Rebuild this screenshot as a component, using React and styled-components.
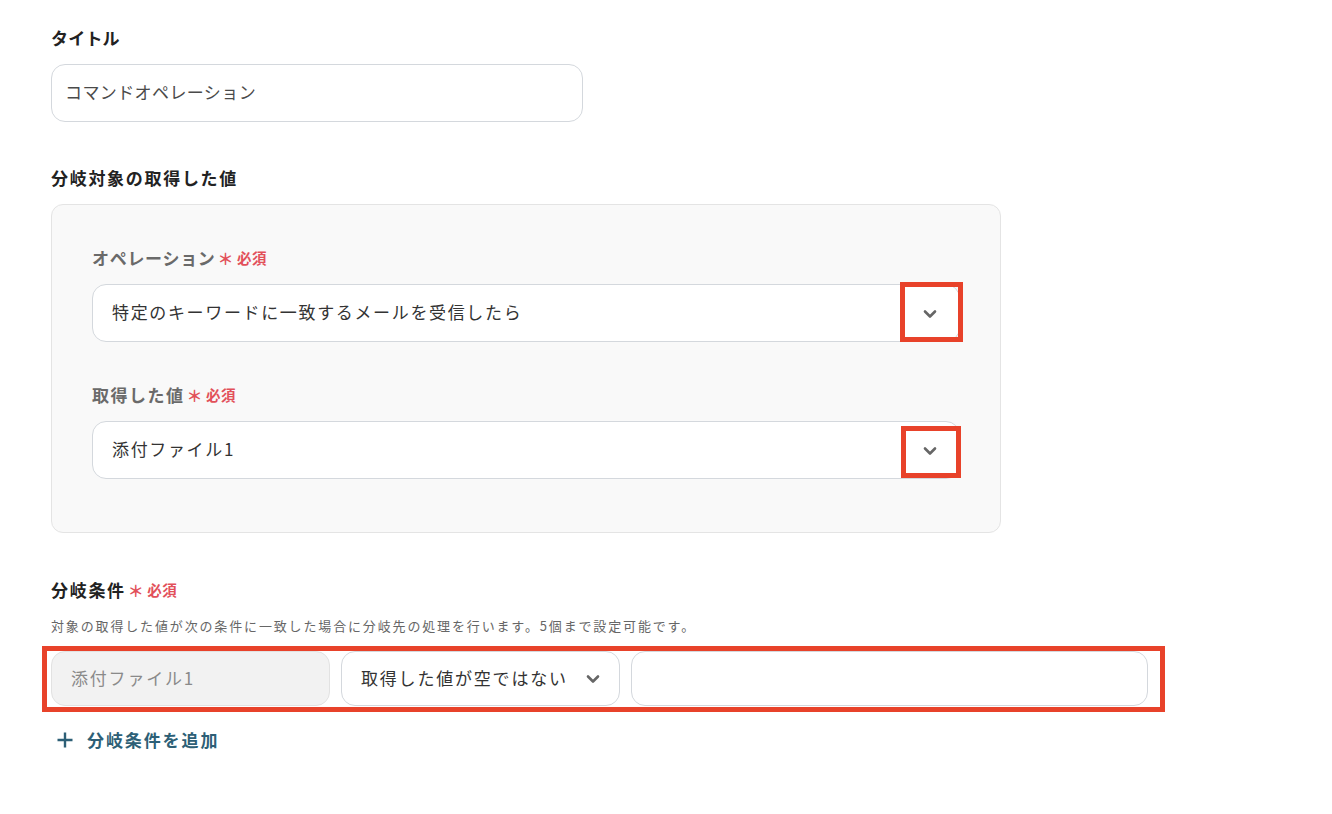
import React from "react";
import styled, { createGlobalStyle } from "styled-components";

const GlobalStyle = createGlobalStyle`
  body {
    margin: 0;
    background: #ffffff;
    font-family: "Noto Sans CJK JP", "Noto Sans", sans-serif;
    color: #222;
  }
`;

const Page = styled.div`
  padding: 25px 0 40px 51px;
  width: 1332px;
  box-sizing: border-box;
`;

const Label = styled.div`
  display: flex;
  align-items: center;
  font-size: 17px;
  font-weight: 700;
  line-height: 26px;
  letter-spacing: ${(p) => p.$spacing ?? 1.3}px;
  color: ${(p) => (p.$muted ? "#6a6a6a" : "#222")};
  margin-top: ${(p) => p.$top || 0}px;
`;

const Required = styled.span`
  display: inline-flex;
  align-items: center;
  margin-left: 2px;
  color: #e2505a;
  font-size: 14.5px;
  font-weight: 700;
  letter-spacing: 0.5px;
`;

const Star = styled.span`
  font-size: 16px;
  margin-right: 3px;
  line-height: 1;
`;

const TextBox = styled.div`
  margin-top: 13px;
  width: 532px;
  height: 58px;
  box-sizing: border-box;
  border: 1px solid #d4d8dd;
  border-radius: 14px;
  padding: 0 13px 3px;
  display: flex;
  align-items: center;
  font-size: 17px;
  letter-spacing: 0.4px;
  color: #4a4a4a;
  background: #fff;
`;

const Panel = styled.div`
  margin-top: 13px;
  width: 950px;
  box-sizing: border-box;
  background: #f9f9f9;
  border: 1px solid #e4e4e4;
  border-radius: 12px;
  padding: 40px 40px 53px 40px;
`;

const Select = styled.div`
  position: relative;
  margin-top: 13px;
  height: 58px;
  box-sizing: border-box;
  border: 1px solid #d4d8dd;
  border-radius: 14px;
  background: #fff;
  padding: 0 22px 3px 19px;
  display: flex;
  align-items: center;
  justify-content: space-between;
  font-size: 17px;
  letter-spacing: 1.65px;
  color: #333;
`;

const Highlight = styled.div`
  position: absolute;
  top: ${(p) => p.$top}px;
  right: ${(p) => p.$right}px;
  width: ${(p) => p.$w}px;
  height: ${(p) => p.$h}px;
  box-sizing: border-box;
  border: 5px solid #e8422a;
  pointer-events: none;
`;

const Chevron = () => (
  <svg width="14" height="10" viewBox="0 0 14 10" style={{ marginTop: 4 }}>
    <polyline
      points="2,2.5 7,7.5 12,2.5"
      fill="none"
      stroke="#666"
      strokeWidth="2.6"
      strokeLinecap="round"
      strokeLinejoin="round"
    />
  </svg>
);

const Description = styled.div`
  margin-top: 13px;
  font-size: 13px;
  line-height: 20px;
  letter-spacing: 1.85px;
  color: #666;
`;

const ConditionFrame = styled.div`
  margin-top: 10px;
  margin-left: -9px;
  width: 1123px;
  box-sizing: border-box;
  border: 5px solid #e8422a;
  padding: 0 12px 1px 4px;
  display: flex;
  gap: 11px;
`;

const CondField = styled.div`
  height: 55px;
  box-sizing: border-box;
  flex: ${(p) => (p.$grow ? 1 : "0 0 279px")};
  border: 1px solid ${(p) => (p.$disabled ? "#e2e2e2" : "#d4d8dd")};
  border-radius: 14px;
  background: ${(p) => (p.$disabled ? "#f2f2f2" : "#fff")};
  color: ${(p) => (p.$disabled ? "#8a8a8a" : "#333")};
  padding: 0 19px 3px 19px;
  display: flex;
  align-items: center;
  justify-content: space-between;
  font-size: 17px;
  letter-spacing: 1.8px;
`;

const AddButton = styled.div`
  margin-top: 15px;
  display: flex;
  align-items: center;
  gap: 13px;
  padding-left: 5px;
  font-size: 17px;
  font-weight: 700;
  line-height: 26px;
  letter-spacing: 1.9px;
  color: #2d5f76;
`;

const Plus = () => (
  <svg width="18" height="18" viewBox="0 0 18 18">
    <path d="M9 1.5v15M1.5 9h15" stroke="#2d5f76" strokeWidth="2.4" />
  </svg>
);

function RequiredMark() {
  return (
    <Required>
      <Star>＊</Star>必須
    </Required>
  );
}

export default function App() {
  return (
    <Page>
      <GlobalStyle />
      <Label $spacing={0.2}>タイトル</Label>
      <TextBox>コマンドオペレーション</TextBox>

      <Label $top={43} $spacing={1.7}>
        分岐対象の取得した値
      </Label>
      <Panel>
        <Label $muted $spacing={0.7}>
          オペレーション
          <RequiredMark />
        </Label>
        <Select>
          特定のキーワードに一致するメールを受信したら
          <Chevron />
          <Highlight $top={-3} $right={-4} $w={63} $h={60} />
        </Select>

        <Label $muted $top={40} $spacing={1.5}>
          取得した値
          <RequiredMark />
        </Label>
        <Select>
          添付ファイル1
          <Chevron />
          <Highlight $top={4} $right={-2} $w={60} $h={52} />
        </Select>
      </Panel>

      <Label $top={44} $spacing={1.7}>
        分岐条件
        <RequiredMark />
      </Label>
      <Description>
        対象の取得した値が次の条件に一致した場合に分岐先の処理を行います。5個まで設定可能です。
      </Description>
      <ConditionFrame>
        <CondField $disabled>添付ファイル1</CondField>
        <CondField>
          取得した値が空ではない
          <Chevron />
        </CondField>
        <CondField $grow />
      </ConditionFrame>

      <AddButton>
        <Plus />
        分岐条件を追加
      </AddButton>
    </Page>
  );
}
